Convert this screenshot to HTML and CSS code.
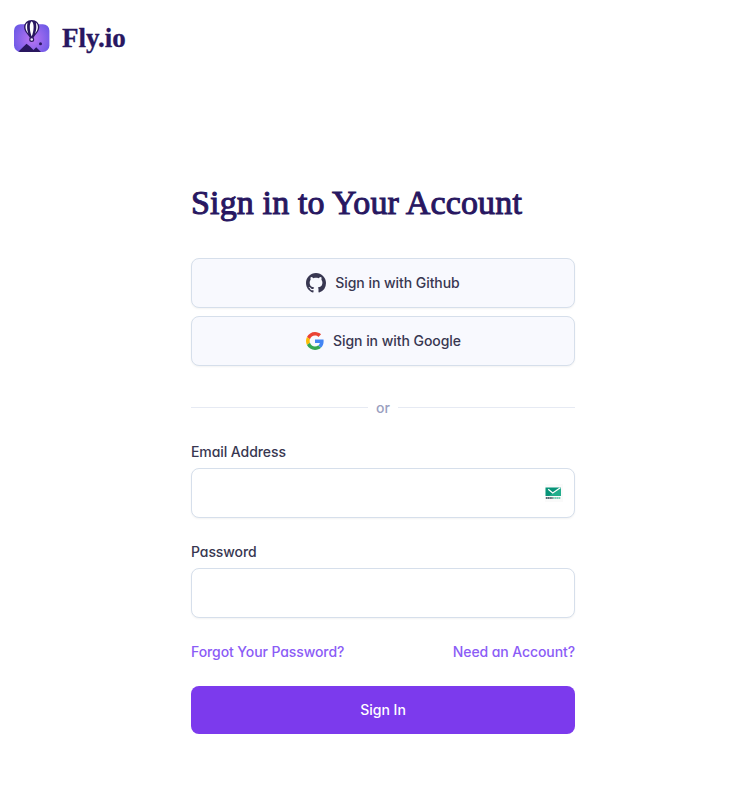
FILE: index.html
```html
<!DOCTYPE html>
<html lang="en">
<head>
<meta charset="utf-8">
<title>Sign in · Fly.io</title>
<link rel="stylesheet" href="styles.css">
</head>
<body>
<header class="header">
  <a class="brand" href="#">
    <svg class="brand-mark" width="36" height="33" viewBox="0 0 36 33" aria-hidden="true">
      <defs>
        <radialGradient id="sky" cx="18" cy="19" r="20" gradientUnits="userSpaceOnUse">
          <stop offset="0" stop-color="#bb75f3"/>
          <stop offset="1" stop-color="#6d59e6"/>
        </radialGradient>
        <clipPath id="tile"><rect y="4.200" width="35.400" height="27.800" rx="6.500"/></clipPath>
      </defs>
      <rect y="4.200" width="35.400" height="27.800" rx="6.500" fill="url(#sky)"/>
      <path clip-path="url(#tile)" fill="#29175f" d="M3 33 12.500 23.800 16 26.600 19.500 30 22.200 27.300 28 33Z"/>
      <circle cx="26.500" cy="23.700" r="1.500" fill="#29175f"/>
      <path d="M17.700 0c-4.500 0-7.600 3.200-7.600 7.100 0 4.800 4.300 7.600 5.900 11h3.400c1.600-3.400 5.900-6.200 5.900-11C25.300 3.200 22.200 0 17.700 0Z" fill="#29175f"/>
      <path d="M17.700 1.300c-1.500 1.300-1.900 3.300-1.900 6s.7 6.300 1.900 9.300c1.200-3 1.900-6.600 1.900-9.300s-.4-4.700-1.900-6ZM13.600 2.500c-1.500 1.100-2.100 2.900-2.100 4.700 0 2.500 1.400 4.500 2.900 6.500-.8-2.300-1.300-4.300-1.300-6.500 0-1.900.1-3.300.5-4.700ZM21.800 2.500c1.500 1.100 2.100 2.900 2.100 4.700 0 2.500-1.400 4.500-2.900 6.500.8-2.300 1.300-4.300 1.300-6.500 0-1.900-.1-3.300-.5-4.700Z" fill="#fff"/>
      <circle cx="17.700" cy="19.500" r="1.900" fill="#f2eaff" stroke="#29175f" stroke-width="1.200"/>
    </svg>
    <span class="brand-name">Fly.io</span>
  </a>
</header>
<main class="signin">
  <h1 class="title">Sign in to Your Account</h1>
  <div class="providers">
    <button class="provider" type="button">
      <svg class="github" width="20" height="20" viewBox="0 0 16 16" aria-hidden="true"><path fill="currentColor" d="M8 0C3.580 0 0 3.580 0 8c0 3.540 2.290 6.530 5.470 7.590.4.070.55-.17.55-.38 0-.19-.01-.82-.01-1.490-2.010.37-2.530-.49-2.690-.94-.09-.23-.48-.94-.82-1.130-.28-.15-.68-.52-.01-.53.63-.01 1.080.58 1.230.82.72 1.210 1.870.87 2.330.66.07-.52.28-.87.51-1.070-1.780-.2-3.640-.89-3.640-3.950 0-.87.31-1.590.82-2.150-.08-.2-.36-1.020.08-2.120 0 0 .67-.21 2.200.82.64-.18 1.320-.27 2-.27s1.360.09 2 .27c1.530-1.040 2.200-.82 2.200-.82.44 1.100.16 1.920.08 2.120.51.56.82 1.270.82 2.150 0 3.070-1.870 3.750-3.650 3.950.29.25.54.73.54 1.480 0 1.070-.01 1.930-.01 2.200 0 .21.15.46.55.38A8.010 8.010 0 0 0 16 8c0-4.420-3.580-8-8-8Z"/></svg>
      <span>Sign in with Github</span>
    </button>
    <button class="provider" type="button">
      <svg class="google" width="18" height="18" viewBox="0 0 48 48" aria-hidden="true">
        <path fill="#ea4335" d="M24 9.500c3.540 0 6.710 1.220 9.210 3.600l6.850-6.850C35.900 2.380 30.470 0 24 0 14.620 0 6.510 5.380 2.560 13.220l7.980 6.190C12.430 13.720 17.740 9.500 24 9.500z"/>
        <path fill="#4285f4" d="M46.980 24.550c0-1.570-.15-3.090-.38-4.550H24v9.020h12.940c-.58 2.960-2.260 5.480-4.780 7.180l7.730 6c4.510-4.180 7.090-10.360 7.090-17.650z"/>
        <path fill="#fbbc05" d="M10.530 28.590c-.48-1.450-.76-2.990-.76-4.590s.27-3.140.76-4.590l-7.980-6.190C.92 16.460 0 20.120 0 24c0 3.880.92 7.540 2.560 10.780l7.970-6.190z"/>
        <path fill="#34a853" d="M24 48c6.480 0 11.930-2.130 15.890-5.810l-7.730-6c-2.150 1.450-4.920 2.300-8.160 2.300-6.260 0-11.570-4.220-13.470-9.910l-7.980 6.190C6.510 42.620 14.620 48 24 48z"/>
      </svg>
      <span>Sign in with Google</span>
    </button>
  </div>
  <div class="divider"><span>or</span></div>
  <form class="form">
    <label class="label" for="email">Email Address</label>
    <div class="field">
      <input class="input" id="email" type="email">
      <svg class="mail" width="18" height="18" viewBox="0 0 18 18" aria-hidden="true">
        <path fill="#fafafa" d="M0 0h18v18H0z"/>
        <path fill="#079478" d="M.5 3.500h15.300v8.500H.5z"/>
        <path fill="#20ae8c" d="M8 9l7.800-5v8H4z"/>
        <path fill="none" stroke="#fff" stroke-width="1.200" d="M3.200 5.200 7.700 9 15.300 3.800"/>
        <path stroke="#243d48" stroke-width="1.300" stroke-dasharray="1.500 .3" d="M.8 14h7.400"/>
        <path stroke="#50bd9f" stroke-width="1.300" stroke-dasharray="1.500 .3" d="M8.200 14h7.400"/>
      </svg>
    </div>
    <label class="label" for="password">Password</label>
    <div class="field"><input class="input" id="password" type="password"></div>
    <div class="links"><a href="#">Forgot Your Password?</a><a href="#">Need an Account?</a></div>
    <button class="submit" type="button">Sign In</button>
  </form>
</main>
</body>
</html>
```
FILE: styles.css
```css
* { box-sizing: border-box; }
body {
  margin: 0;
  background: #fff;
  color: #383751;
  font: 500 14px/20px Inter, "Liberation Sans", sans-serif;
  font-feature-settings: "cv11";
}
a { color: inherit; text-decoration: none; }
svg { display: block; flex: none; }
.header { height: 76px; padding: 20px 14px; }
.brand { display: flex; width: max-content; gap: 12px; color: #281761; }
.brand-name { font: bold 27px/37px "Liberation Serif", serif; -webkit-text-stroke: .3px #281761; }
.signin { width: 384px; margin: 107px auto 0 191px; }
.title {
  margin: 0 0 35px;
  color: #281761;
  font: 400 34px/40px "Liberation Serif", serif;
  letter-spacing: .14px;
  white-space: nowrap;
  -webkit-text-stroke: 1px #281761;
}
.providers { display: grid; gap: 8px; }
.provider {
  display: flex;
  align-items: center;
  justify-content: center;
  gap: 8px;
  height: 50px;
  padding: 0;
  border: 1px solid #d6dfeb;
  border-radius: 8px;
  background: #f8f9fe;
  box-shadow: 0 1px 2px #0000000d;
  color: inherit;
  font: inherit;
  font-feature-settings: inherit;
  letter-spacing: -.05px;
}
.github { margin-right: 1px; }
.google { margin: 0 1px; }
.divider {
  display: flex;
  align-items: center;
  gap: 8px;
  height: 20px;
  margin: 32px 0 24px;
  color: #9aa0c0;
}
.divider::before, .divider::after { content: ""; flex: 1; height: 1px; margin-top: -1px; background: #e6eaf3; }
.label { display: block; margin-bottom: 6px; letter-spacing: -.08px; }
.field { position: relative; height: 50px; margin-bottom: 24px; }
.input {
  display: block;
  width: 100%;
  height: 50px;
  padding: 0 16px;
  border: 1px solid #d6dfeb;
  border-radius: 8px;
  background: #fff;
  box-shadow: 0 1px 2px #0000000d;
  font: inherit;
}
.mail { position: absolute; right: 12px; top: 16px; }
.links { display: flex; justify-content: space-between; margin-bottom: 24px; color: #8b5cf6; letter-spacing: -.09px; }
.submit {
  display: block;
  width: 100%;
  height: 48px;
  border: 0;
  border-radius: 8px;
  background: #7c3aed;
  color: #fff;
  font: inherit;
  font-feature-settings: inherit;
}
```
